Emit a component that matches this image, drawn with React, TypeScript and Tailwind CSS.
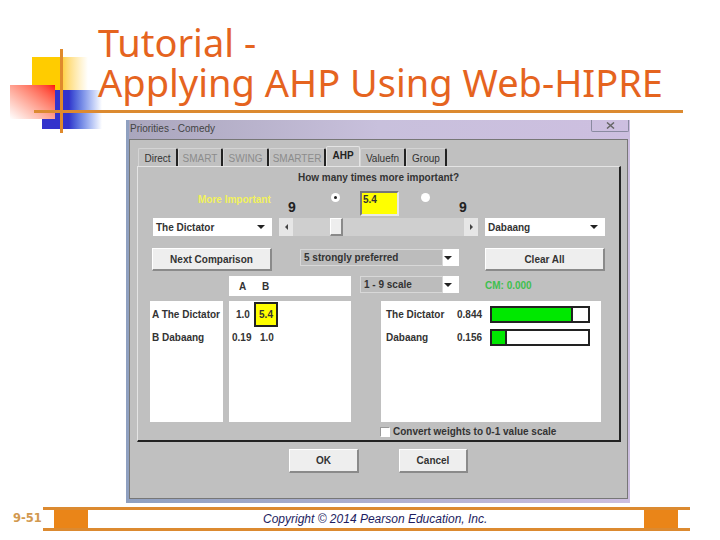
const ui = "font-['Liberation_Sans',Arial,sans-serif] font-bold text-[10px] text-[#333]"

const raised = 'bg-[#eeeeee] border border-white border-r-[#8a8a8a] border-b-[#8a8a8a] border-b-2 border-r-2'

const Arrow = () => (
  <div className="ml-auto mr-[7px] h-0 w-0 border-x-[4px] border-t-[4px] border-x-transparent border-t-[#222]" />
)

const Select = (props: { label: string; muted?: boolean; className: string }) => (
  <div className={`flex items-center bg-white ${props.className}`}>
    <div className={`flex h-full items-center pl-[3px] ${props.muted === true ? 'flex-1 border border-[#d8d8d8] bg-[#bcbcbc]' : 'flex-1'}`}>
      {props.label}
    </div>
    <div className="flex w-[16px] items-center">
      <Arrow />
    </div>
  </div>
)

const Button = (props: { label: string; className: string }) => (
  <div className={`flex items-center justify-center ${raised} ${props.className}`}>{props.label}</div>
)

const Radio = (props: { on?: boolean }) => (
  <div className="mt-[3px] flex h-[9px] w-[9px] items-center justify-center rounded-full bg-white">
    {props.on === true && <div className="h-[3px] w-[3px] rounded-full bg-[#222]" />}
  </div>
)

const tabs = [
  { name: 'Direct', w: 'w-[40px]' },
  { name: 'SMART', w: 'w-[45px]', off: true },
  { name: 'SWING', w: 'w-[46px]', off: true },
  { name: 'SMARTER', w: 'w-[57px]', off: true },
  { name: 'AHP', w: 'w-[34px]', active: true },
  { name: 'Valuefn', w: 'w-[46px]' },
  { name: 'Group', w: 'w-[41px]' }
]

const results = [
  { name: 'The Dictator', value: '0.844', fill: 'w-[84%]' },
  { name: 'Dabaang', value: '0.156', fill: 'w-[16%]' }
]

const Tabs = () => (
  <div className="ml-[8px] flex h-[19px] items-end">
    {tabs.map((tab) => (
      <div
        key={tab.name}
        className={`flex items-center justify-center rounded-t-[2px] ${tab.w} ${
          tab.active === true
            ? 'h-[20px] border-t border-l border-r border-[#e4e4e4] bg-[#c4c4c4] pb-[3px] font-bold text-[#222]'
            : 'h-[18px] border-r-2 border-l border-t border-[#d4d4d4] border-r-[#222] pt-[1px] font-normal'
        } ${tab.off === true ? 'text-[#8c8c8c]' : ''}`}
      >
        {tab.name}
      </div>
    ))}
  </div>
)

const Panel = () => (
  <div className="ml-[7px] h-[276px] w-[484px] border-b-2 border-r-2 border-t border-l border-[#222] border-t-[#e4e4e4] border-l-[#e4e4e4]">
    <div className="mt-[4px] h-[14px] text-center leading-[14px]">How many times more important?</div>

    <div className="mt-[5px] flex h-[27px]">
      <div className="ml-[60px] mt-[2px] w-[90px] text-[#f2f25c]">More Important</div>
      <div className="mt-[10px] w-[10px] text-[14px] leading-[14px] text-[#222]">9</div>
      <div className="ml-[33px]"><Radio on /></div>
      <div className="ml-[20px] mt-[1px] h-[25px] w-[39px] border-2 border-[#e8e8e8] border-t-[#777] border-l-[#777] bg-[#ffff00] pl-[1px] leading-[14px]">5.4</div>
      <div className="ml-[22px]"><Radio /></div>
      <div className="ml-[29px] mt-[10px] w-[10px] text-[14px] leading-[14px] text-[#222]">9</div>
    </div>

    <div className="mt-[1px] flex h-[18px]">
      <Select label="The Dictator" className="ml-[15px] w-[119px]" />
      <div className="ml-[7px] flex w-[199px] bg-[#cfcfcf]">
        <div className="flex w-[14px] items-center justify-center bg-[#e6e6e6]">
          <div className="h-0 w-0 border-y-[3px] border-r-[3px] border-y-transparent border-r-[#444]" />
        </div>
        <div className={`ml-[37px] w-[13px] ${raised}`} />
        <div className="ml-auto flex w-[14px] items-center justify-center bg-[#e6e6e6]">
          <div className="h-0 w-0 border-y-[3px] border-l-[3px] border-y-transparent border-l-[#444]" />
        </div>
      </div>
      <Select label="Dabaang" className="ml-[7px] w-[120px]" />
    </div>

    <div className="mt-[12px] flex h-[23px]">
      <Button label="Next Comparison" className="ml-[14px] w-[120px]" />
      <Select label="5 strongly preferred" muted className="ml-[28px] mt-[1px] h-[17px] w-[159px]" />
      <Button label="Clear All" className="ml-[26px] w-[120px]" />
    </div>

    <div className="mt-[5px] flex h-[20px]">
      <div className="ml-[91px] flex h-[20px] w-[122px] items-center bg-white">
        <span className="ml-[10px] w-[23px]">A</span>
        <span>B</span>
      </div>
      <Select label="1 - 9 scale" muted className="ml-[9px] h-[17px] w-[99px]" />
      <div className="ml-[26px] mt-[2px] text-[#3fbf4f]">CM: 0.000</div>
    </div>

    <div className="mt-[5px] flex h-[121px]">
      <div className="ml-[12px] w-[73px] bg-white pl-[2px] pt-[7px]">
        <div className="h-[23px] leading-[13px]">A The Dictator</div>
        <div className="leading-[13px]">B Dabaang</div>
      </div>
      <div className="ml-[6px] w-[122px] bg-white pt-[1px]">
        <div className="flex h-[25px] items-center">
          <span className="ml-[7px] w-[18px]">1.0</span>
          <span className="flex h-[25px] w-[24px] items-center justify-center border-2 border-[#222] bg-[#ffff00]">5.4</span>
        </div>
        <div className="mt-[4px] flex leading-[13px]">
          <span className="ml-[3px] w-[28px]">0.19</span>
          <span>1.0</span>
        </div>
      </div>
      <div className="ml-[30px] w-[220px] bg-white pl-[5px] pt-[5px]">
        {results.map((row) => (
          <div key={row.name} className="mb-[6px] flex h-[17px] items-center">
            <span className="w-[71px]">{row.name}</span>
            <span className="w-[33px]">{row.value}</span>
            <div className="h-[17px] w-[100px] border-2 border-[#222] bg-white">
              <div className={`h-full border-r-2 border-[#222] bg-[#00e800] ${row.fill}`} />
            </div>
          </div>
        ))}
      </div>
    </div>

    <div className="ml-[242px] mt-[2px] flex items-center">
      <div className="h-[10px] w-[10px] border border-[#999] border-r-white border-b-white bg-white" />
      <span className="ml-[3px]">Convert weights to 0-1 value scale</span>
    </div>
  </div>
)

const Dialog = () => (
  <div className="ml-[126px] mt-[7px] flex h-[383px] w-[504px] flex-col bg-linear-to-r from-[#8fa0c0] to-[#cdbfe0] pb-[4px] pl-[3px] pr-[2px]">
    <div className="flex h-[19px] justify-between bg-linear-to-r from-[#aaa6bd] via-[#c8c0dc] to-[#cdbfe0] pl-[1px]">
      <span className="pt-[1px] font-['Liberation_Sans',Arial,sans-serif] text-[10px] text-[#444]">Priorities - Comedy</span>
      <div className="-mr-[1px] flex h-[12px] w-[38px] items-center justify-center rounded-b-[2px] border border-t-0 border-[#8a8aa0]">
        <svg width="9" height="7" viewBox="0 0 9 7" fill="none" stroke="#666" strokeWidth="1.5">
          <path d="M1 0.5 8 6.5M8 0.5 1 6.5" />
        </svg>
      </div>
    </div>
    <div className={`flex-1 border border-[#777] bg-[#c0c0c0] pt-[7px] ${ui}`}>
      <Tabs />
      <Panel />
      <div className="mt-[7px] flex">
        <Button label="OK" className="ml-[159px] h-[24px] w-[70px]" />
        <Button label="Cancel" className="ml-[40px] h-[24px] w-[69px]" />
      </div>
    </div>
  </div>
)

const Logo = () => (
  <>
    <div className="absolute left-[32px] top-[57px] h-[50px] w-[56px] bg-linear-to-r from-[#ffcc00] from-50% to-white" />
    <div className="absolute left-[42px] top-[90px] h-[39px] w-[60px] bg-linear-to-r from-[#3333cc] from-45% to-white" />
    <div className="absolute left-[10px] top-[85px] h-[34px] w-[45px] bg-linear-to-bl from-[#ff0000] to-white" />
    <div className="absolute left-[60px] top-[49px] h-[84px] w-[3px] bg-[#e08a2c]" />
  </>
)

const Footer = () => (
  <div className="mt-[4px] flex h-[24px] items-stretch">
    <div className="w-[43px] pl-[13px] pt-[3px] font-['DejaVu_Sans',sans-serif] text-[11.5px] font-bold leading-[16px] text-[#d2994f]">9-51</div>
    <div className="flex w-[647px] border-y-[3px] border-[#dc8a30] pl-[11px] pr-[12px]">
      <div className="w-[34px] bg-[#ea8518]" />
      <div className="flex-1 bg-white pl-[175px] font-['Liberation_Sans',Arial,sans-serif] text-[12px] italic leading-[18px] text-[#1c1c60]">
        Copyright © 2014 Pearson Education, Inc.
      </div>
      <div className="w-[34px] bg-[#ea8518]" />
    </div>
  </div>
)

export default function App() {
  return (
    <div className="relative h-[540px] w-[720px] overflow-hidden bg-white">
      <Logo />
      <div className="relative ml-[34px] h-[113px] w-[649px] border-b-[3px] border-[#dc8a30] pl-[64px] pt-[22px] font-['Noto_Sans',Tahoma,sans-serif] text-[38px] leading-[40px] text-[#e5641f]">
        <div>Tutorial -</div>
        <div>Applying AHP Using Web-HIPRE</div>
      </div>
      <Dialog />
      <Footer />
    </div>
  )
}
